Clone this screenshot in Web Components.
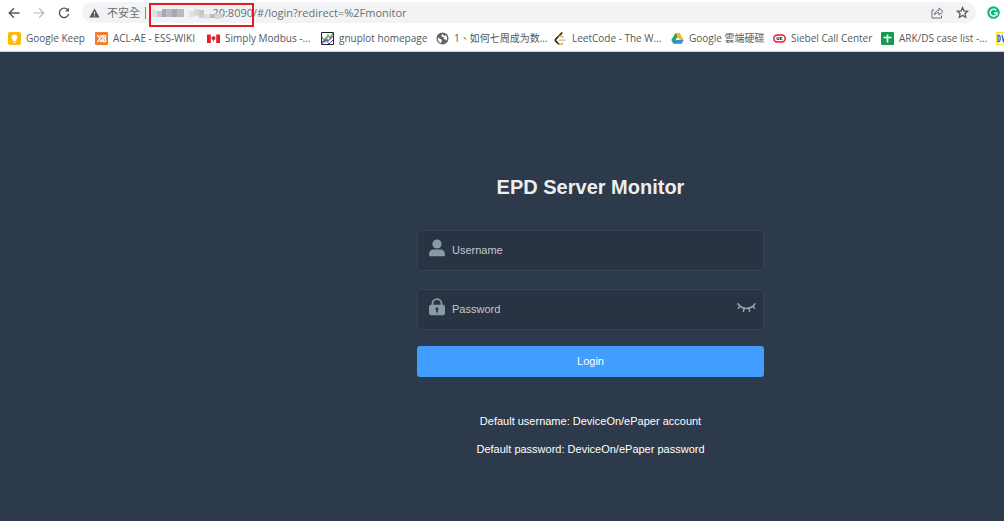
<!DOCTYPE html>
<html lang="en">
<head>
<meta charset="utf-8">
<title>EPD Server Monitor</title>
<style>
html, body { margin: 0; height: 100%; }
body { font-family: "Liberation Sans", Arial, sans-serif; }
</style>
</head>
<body>
<app-window></app-window>
<script>
const UI_FONT = '"Open Sans", "Noto Sans CJK TC", sans-serif';

class BaseElement extends HTMLElement {
  connectedCallback() {
    if (this.shadowRoot) return;
    this.attachShadow({ mode: 'open' }).innerHTML = this.render();
  }
}

customElements.define('app-window', class extends BaseElement {
  render() {
    return `<style>
      :host { display: flex; flex-direction: column; min-height: 100vh; background: #fff; }
      login-page { flex: 1; }
    </style>
    <address-bar></address-bar>
    <bookmark-bar></bookmark-bar>
    <login-page></login-page>`;
  }
});

customElements.define('address-bar', class extends BaseElement {
  render() {
    return `<style>
      :host { display: flex; align-items: center; height: 25px; font: 11px/20px ${UI_FONT}; color: #6b6f74; }
      button { border: 0; padding: 0; background: none; display: flex; color: #54585d; }
      svg { display: block; }
      nav { display: flex; gap: 11px; padding: 0 11px 0 7px; }
      .field { flex: 1; min-width: 0; display: flex; align-items: center; height: 21px; border-radius: 11px; background: #f1f3f4; padding: 0 7px 0 7px; }
      .warn { margin-right: 7px; }
      .security { white-space: nowrap; }
      .sep { width: 1px; height: 12px; background: #85898d; margin: 0 4px 0 5px; }
      .url { flex: 1; display: flex; align-items: center; white-space: nowrap; font-size: 11px; }
      .host { position: relative; display: flex; justify-content: flex-end; width: 103px; }
      .mosaic { position: absolute; left: 0; top: 4px; }
      .mark { position: absolute; z-index: 1; left: -1px; top: 0; width: 101px; height: 20px; border: 2px solid #e51c24; }
      .actions { display: flex; gap: 12px; }
      .ext { margin: 0 4px 0 11px; }
    </style>
    <nav>
      <button aria-label="Back"><svg width="14" height="14" viewBox="0 0 14 14" fill="none" stroke="currentColor" stroke-width="1.4"><path d="M12.5 7H2.5M7 2.2 2.2 7 7 11.8"/></svg></button>
      <button aria-label="Forward"><svg width="14" height="14" viewBox="0 0 14 14" fill="none" stroke="#b5b8bb" stroke-width="1.2"><path d="M1.5 7h10M7 2.2 11.8 7 7 11.8"/></svg></button>
      <button aria-label="Reload"><svg width="14" height="14" viewBox="0 0 14 14" fill="none" stroke="currentColor" stroke-width="1.4"><path d="M11 4.2A4.7 4.7 0 1 0 11.7 7.8"/><path d="M12 1.5v4H8z" fill="currentColor" stroke="none"/></svg></button>
    </nav>
    <div class="field">
      <svg class="warn" width="11" height="10" viewBox="0 0 11 10"><path d="M5.5 .5 10.7 9.6H.3z" fill="#54585d"/><path d="M5.5 3.7v2.6M5.5 7.2v1.2" stroke="#f1f3f4"/></svg>
      <span class="security">不安全</span><span class="sep"></span>
      <div class="url">
        <span class="host">120:8090
          <svg class="mosaic" width="74" height="12" viewBox="0 0 74 12">
            <path fill="#f1f3f4" d="M0 0h60v12H0z"/>
            <path fill="#dfe1e3" d="M2 3h5v7H2zM39 4h5v6h-5zM54 7h6v5h-6z"/>
            <path fill="#c4c6ca" d="M7 4h5v6H7zM49 3h5v5h-5z"/>
            <path fill="#a5a8ad" d="M12 2h4v8h-4zM22 2h5v8h-5z"/>
            <path fill="#bdbabf" d="M16 2h6v8h-6zM27 2h7v8h-7zM60 7h5v4h-5z"/>
            <path fill="#dcd8cd" d="M44 2h5v7h-5zM65 7h5v5h-5z"/>
            <path fill="#c9d2dc" d="M49 8h5v3h-5zM70 7h3v4h-3z"/>
          </svg><span class="mark"></span></span><span>/#/login?redirect=%2Fmonitor</span>
      </div>
      <div class="actions">
        <button aria-label="Share"><svg width="13" height="13" viewBox="0 0 13 13" fill="none" stroke="#6b6f74"><path d="M3 4H1v8h9.500V9.500M3.500 9C3.700 6 5.500 4.500 8 4.400V2l4 3.600-4 3.500V6.700C6 6.700 4.600 7.500 3.500 9z"/></svg></button>
        <button aria-label="Bookmark this page"><svg width="13" height="13" viewBox="0 0 13 13" fill="none" stroke="#54585d" stroke-width="1.200"><path d="m6.500 1.500 1.500 3.400 3.600.4-2.700 2.400.8 3.600-3.200-1.900-3.200 1.900.8-3.600-2.700-2.400 3.600-.4z"/></svg></button>
      </div>
    </div>
    <button class="ext" aria-label="Extension"><svg width="13" height="13" viewBox="0 0 13 13"><circle cx="6.500" cy="6.500" r="6.300" fill="#12b886"/><path d="M9.200 4.300A3.500 3.500 0 1 0 10 7H7.200M10 7v2.200" fill="none" stroke="#fff" stroke-width="1.300"/></svg></button>`;
  }
});

const ICONS = {
  keep: '<rect width="13" height="13" rx="2" fill="#fbbc04"/><path d="M6.500 2.400a3 3 0 0 0-1.600 5.500V9h3.200V7.900a3 3 0 0 0-1.600-5.500zM5 9.700h3v1H5z" fill="#fff"/>',
  wiki: '<rect width="13" height="13" rx="1" fill="#ef7d2d"/><g fill="none" stroke="#fff" stroke-width="1.300"><path d="m2.300 3.200 3 3.300-3 3.500M5 3.200 6.500 5 8 3.200M5 10l1.500-2L8 10"/><path d="M7.800 6.500 9 3.300c2.400 0 2.400 3 0 3.200 2.400 0 2.400 3.300 0 3.300z"/></g>',
  canada: '<path d="M0 2.500h13v8.500H0z" fill="#fff"/><path d="M0 2.500h3.800V11H0zM9.200 2.500H13V11H9.200zM6.500 3.500l.7 1.300 1.300 0-.2 1.600.4.700-1.800.9V9.500h-.8V8l-1.800-.9.4-.7-.2-1.600 1.300 0z" fill="#e32228"/>',
  plot: '<path d="M.5.5h12v12H.5z" fill="#fff" stroke="#222"/><path d="M1 12 5 6l2 3 5-5" fill="none" stroke="#d33a9a" stroke-width="1.300"/><path d="m1 5 3 5 3-7 2 3 3-5" fill="none" stroke="#29b34a" stroke-width="1.200"/><path d="m1 10 4-2 3 4 4-4" fill="none" stroke="#3956c8"/>',
  globe: '<circle cx="6.500" cy="6.500" r="6" fill="#5f6368"/><path d="M1.800 5.500 5 7.200l1 1.300-1.200 2.700C2.600 10.400 1.500 8.200 1.800 5.500zM6.800 1.900 5.200 3.600 6 4.800l2.200.4L7.500 7l2.300.6.400 1.300c1.300-1.900 1.200-4.200-.3-5.700L8.300 4z" fill="#fff"/>',
  leet: '<g fill="none" stroke-linecap="round" stroke-width="1.700"><path d="M7.800 1 2 6.800c-.9 1-.8 1.700 0 2.500l2.800 2.700" stroke="#222"/><path d="M4.800 12c1.300.8 2.600.5 3.700-.8M5 4.400c1.500-.9 2.500-.5 3.800.8" stroke="#f5a623" stroke-width="1.400"/><path d="M5.500 8.200H11" stroke="#b5b5b5" stroke-width="1.300"/></g>',
  drive: '<path d="M4.500 1h4l1 2-5 8.500H2.300L.3 8z" fill="#22a565"/><path d="M4.500 1h4l4.200 7h-4z" fill="#fbbc04"/><path d="M4.200 8h8.500l-2 3.700H2.300z" fill="#4285f4"/><path d="M6.500 4.700 4.600 8h3.900z" fill="#fff"/>',
  siebel: '<rect x=".8" y="3" width="11.400" height="7" rx="3.500" fill="#fff" stroke="#e31b2c" stroke-width="1.500"/><path d="M4 5v2.500h2V5M7.500 5v3M9.300 5 8 6.500 9.300 8" fill="none" stroke="#333" stroke-width=".9"/>',
  sheet: '<rect width="13" height="13" rx="1" fill="#169c50"/><path d="M6.500 2.500v8M2.500 5.500h8" stroke="#fff" stroke-width="1.600"/>',
  dw: '<path d="M.7.700h12v12H.700z" fill="#fffde0" stroke="#f4e53c" stroke-width="1.400"/><path d="M2 3v7c3 0 3-7 0-7M6 3l1.500 7L9 4l1.500 6L12 3" fill="none" stroke="#345ac0" stroke-width="1.200"/>'
};

customElements.define('bookmark-link', class extends BaseElement {
  render() {
    return `<style>
      :host { display: block; min-width: 0; }
      a { display: flex; align-items: center; gap: 5px; color: #55585c; text-decoration: none; white-space: nowrap; }
      svg { flex: none; }
    </style>
    <a href="#"><svg width="13" height="13" viewBox="0 0 13 13" aria-hidden="true">${ICONS[this.getAttribute('icon')]}</svg><slot></slot></a>`;
  }
});

customElements.define('bookmark-bar', class extends BaseElement {
  render() {
    return `<style>
      :host { display: grid; grid-template-columns: 87px 112px 114px 115px 118px 117px 102px 108px 115px 1fr;
        align-items: center; height: 26px; padding-left: 8px; border-bottom: 1px solid #cdd1d5; overflow: hidden;
        font: 10px/16px ${UI_FONT}; }
    </style>
    <bookmark-link icon="keep">Google Keep</bookmark-link>
    <bookmark-link icon="wiki">ACL-AE - ESS-WIKI</bookmark-link>
    <bookmark-link icon="canada">Simply Modbus -...</bookmark-link>
    <bookmark-link icon="plot">gnuplot homepage</bookmark-link>
    <bookmark-link icon="globe">1、如何七周成为数...</bookmark-link>
    <bookmark-link icon="leet">LeetCode - The W...</bookmark-link>
    <bookmark-link icon="drive">Google 雲端硬碟</bookmark-link>
    <bookmark-link icon="siebel">Siebel Call Center</bookmark-link>
    <bookmark-link icon="sheet">ARK/DS case list -...</bookmark-link>
    <bookmark-link icon="dw"></bookmark-link>`;
  }
});

customElements.define('login-field', class extends BaseElement {
  render() {
    const label = this.getAttribute('label');
    return `<style>
      :host { display: flex; align-items: center; height: 41px; box-sizing: border-box; padding: 0 7px 2px 10px; gap: 6px;
        border: 1px solid #374453; border-radius: 4px; background: #283443; color: #889aa4; }
      label { display: flex; padding-bottom: 4px; }
      input { flex: 1; min-width: 0; border: 0; padding: 0; outline: 0; background: none; color: #fff; font: 11px/16px "Liberation Sans", Arial, sans-serif; }
      input::placeholder { color: #c4c8cd; opacity: 1; }
    </style>
    <label for="field" aria-label="${label}"><slot name="icon"></slot></label>
    <input id="field" type="${this.getAttribute('type')}" placeholder="${label}">
    <slot name="action"></slot>`;
  }
});

customElements.define('login-page', class extends BaseElement {
  render() {
    return `<style>
      :host { display: flex; justify-content: center; box-sizing: border-box; padding: 122px 0 40px 177px; background: #2d3a4b; }
      form { width: 42%; min-width: 280px; max-width: 347px; }
      h1 { margin: 0 0 30px; font-size: 20px; line-height: 26px; text-align: center; color: #eee; }
      login-field + login-field { margin-top: 18px; }
      svg { display: block; }
      button { font: inherit; border: 0; padding: 0; }
      .eye { background: none; color: #9ba8b1; padding-bottom: 2px; }
      .login { display: block; width: 100%; height: 31px; margin-top: 16px; border-radius: 3px; background: #409eff; color: #fff; font-size: 11px; line-height: 16px; padding-bottom: 1px; }
      .tips { padding-top: 36px; text-align: center; color: #fff; font-size: 11px; line-height: 16px; }
      p { margin: 0 0 12px; }
    </style>
    <form>
      <h1>EPD Server Monitor</h1>
      <login-field label="Username" type="text">
        <svg slot="icon" width="18" height="18" viewBox="0 0 18 18" fill="currentColor"><circle cx="9" cy="5" r="4.600"/><path d="M1 15.500C1 12.300 3 10.600 5.600 10.600h6.800c2.600 0 4.600 1.700 4.600 4.900 0 1.200-.5 1.800-1.500 1.800h-13C1.500 17.300 1 16.700 1 15.500z"/></svg>
      </login-field>
      <login-field label="Password" type="password">
        <svg slot="icon" width="18" height="18" viewBox="0 0 18 18"><path d="M4.500 8V5.600a4.500 4.500 0 0 1 9 0V8" fill="none" stroke="currentColor" stroke-width="1.800"/><rect x="1" y="6.800" width="16" height="10.500" rx="2" fill="currentColor"/><path d="M9 9.500a1.500 1.500 0 0 0-.8 2.800V14.500h1.600v-2.200A1.500 1.500 0 0 0 9 9.500z" fill="#283443"/></svg>
        <button slot="action" class="eye" type="button" aria-label="Show password"><svg width="19" height="12" viewBox="0 0 20 12" fill="none" stroke="currentColor" stroke-width="1.500" stroke-linecap="round"><path d="M1 1.500c4.500 6.500 13.500 6.500 18 0M3.300 4.200 1.500 6.200M7.500 6.400 6.800 9.500M12.500 6.400l.7 3.100M16.700 4.200l1.800 2"/></svg></button>
      </login-field>
      <button class="login" type="button">Login</button>
      <div class="tips">
        <p>Default username: DeviceOn/ePaper account</p>
        <p>Default password: DeviceOn/ePaper password</p>
      </div>
    </form>`;
  }
});
</script>
</body>
</html>
